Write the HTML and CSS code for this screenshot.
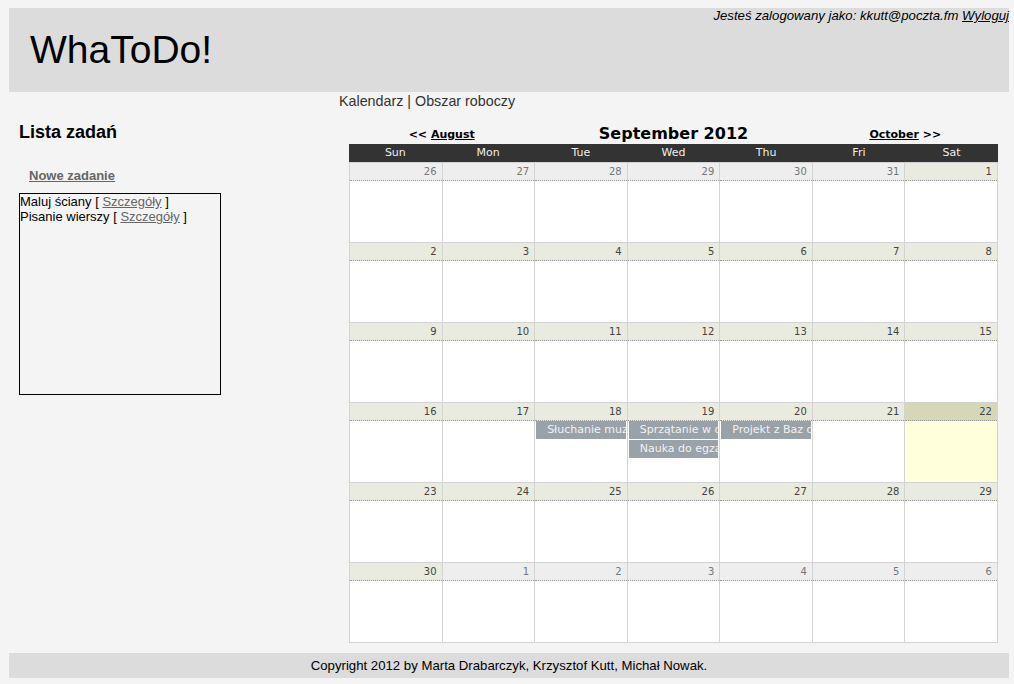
FILE: index.html
```html
<!DOCTYPE html>
<html lang="pl">
<head>
<meta charset="utf-8">
<title>WhaToDo!</title>
<link rel="stylesheet" href="styles.css">
</head>
<body>
<div class="page">
  <header class="top">
    <div class="login">Jesteś zalogowany jako: kkutt@poczta.fm <a href="#">Wyloguj</a></div>
    <h1 class="logo">WhaToDo!</h1>
  </header>
  <div class="main">
    <aside class="sidebar">
      <h2 class="side-title">Lista zadań</h2>
      <a class="new-task" href="#">Nowe zadanie</a>
      <div class="task-box">
        <div>Maluj ściany [ <a href="#">Szczegóły</a> ]</div>
        <div>Pisanie wierszy [ <a href="#">Szczegóły</a> ]</div>
      </div>
    </aside>
    <section class="content">
      <nav class="topnav">Kalendarz | Obszar roboczy</nav>
      <div class="calendar">
        <div class="cal-nav">
          <div class="nav-prev">&lt;&lt; <a href="#">August</a></div>
          <div class="nav-title">September 2012</div>
          <div class="nav-next"><a href="#">October</a> &gt;&gt;</div>
        </div>
        <div class="dow">
          <div>Sun</div><div>Mon</div><div>Tue</div><div>Wed</div><div>Thu</div><div>Fri</div><div>Sat</div>
        </div>
        <div class="grid">
          <div class="day other"><div class="num">26</div><div class="body"></div></div>
          <div class="day other"><div class="num">27</div><div class="body"></div></div>
          <div class="day other"><div class="num">28</div><div class="body"></div></div>
          <div class="day other"><div class="num">29</div><div class="body"></div></div>
          <div class="day other"><div class="num">30</div><div class="body"></div></div>
          <div class="day other"><div class="num">31</div><div class="body"></div></div>
          <div class="day"><div class="num">1</div><div class="body"></div></div>

          <div class="day"><div class="num">2</div><div class="body"></div></div>
          <div class="day"><div class="num">3</div><div class="body"></div></div>
          <div class="day"><div class="num">4</div><div class="body"></div></div>
          <div class="day"><div class="num">5</div><div class="body"></div></div>
          <div class="day"><div class="num">6</div><div class="body"></div></div>
          <div class="day"><div class="num">7</div><div class="body"></div></div>
          <div class="day"><div class="num">8</div><div class="body"></div></div>

          <div class="day"><div class="num">9</div><div class="body"></div></div>
          <div class="day"><div class="num">10</div><div class="body"></div></div>
          <div class="day"><div class="num">11</div><div class="body"></div></div>
          <div class="day"><div class="num">12</div><div class="body"></div></div>
          <div class="day"><div class="num">13</div><div class="body"></div></div>
          <div class="day"><div class="num">14</div><div class="body"></div></div>
          <div class="day"><div class="num">15</div><div class="body"></div></div>

          <div class="day"><div class="num">16</div><div class="body"></div></div>
          <div class="day"><div class="num">17</div><div class="body"></div></div>
          <div class="day"><div class="num">18</div><div class="body"><div class="event">Słuchanie muzyki</div></div></div>
          <div class="day"><div class="num">19</div><div class="body"><div class="event">Sprzątanie w domu</div><div class="event">Nauka do egzaminu</div></div></div>
          <div class="day"><div class="num">20</div><div class="body"><div class="event">Projekt z Baz danych</div></div></div>
          <div class="day"><div class="num">21</div><div class="body"></div></div>
          <div class="day today"><div class="num">22</div><div class="body"></div></div>

          <div class="day"><div class="num">23</div><div class="body"></div></div>
          <div class="day"><div class="num">24</div><div class="body"></div></div>
          <div class="day"><div class="num">25</div><div class="body"></div></div>
          <div class="day"><div class="num">26</div><div class="body"></div></div>
          <div class="day"><div class="num">27</div><div class="body"></div></div>
          <div class="day"><div class="num">28</div><div class="body"></div></div>
          <div class="day"><div class="num">29</div><div class="body"></div></div>

          <div class="day"><div class="num">30</div><div class="body"></div></div>
          <div class="day other"><div class="num">1</div><div class="body"></div></div>
          <div class="day other"><div class="num">2</div><div class="body"></div></div>
          <div class="day other"><div class="num">3</div><div class="body"></div></div>
          <div class="day other"><div class="num">4</div><div class="body"></div></div>
          <div class="day other"><div class="num">5</div><div class="body"></div></div>
          <div class="day other"><div class="num">6</div><div class="body"></div></div>
        </div>
      </div>
    </section>
  </div>
  <footer class="foot">Copyright 2012 by Marta Drabarczyk, Krzysztof Kutt, Michał Nowak.</footer>
</div>
</body>
</html>
```

FILE: styles.css
```css
html, body {
  margin: 0;
  padding: 0;
  background: #f4f4f4;
}
body {
  font-family: "Liberation Sans", Arial, sans-serif;
  color: #000;
}
.page {
  width: 1000px;
  margin: 8px 0 0 9px;
}
.top {
  background: #dcdcdc;
  height: 84px;
}
.login {
  text-align: right;
  font-style: italic;
  font-size: 13.2px;
  line-height: 15px;
}
.login a {
  color: #000;
}
.logo {
  margin: 5px 0 0 21px;
  font-size: 39px;
  font-weight: normal;
  line-height: 44px;
}
.main {
  display: flex;
}
.sidebar {
  width: 310px;
  padding: 0 10px;
}
.side-title {
  margin: 29px 0 0 0;
  font-size: 18px;
  line-height: 22px;
  font-weight: bold;
}
.new-task {
  display: block;
  margin: 25px 0 0 10px;
  font-size: 13px;
  line-height: 15px;
  font-weight: bold;
  color: #666;
  width: max-content;
}
.task-box {
  margin-top: 10px;
  width: 200px;
  height: 200px;
  border: 1px solid #000;
  font-size: 13px;
  line-height: 15px;
}
.task-box a {
  color: #666;
}
.content {
  flex: 1;
}
.topnav {
  margin-top: 1px;
  font-size: 14.3px;
  line-height: 16px;
  color: #333;
}
.calendar {
  width: 649px;
  margin: 15px 0 0 10px;
  font-family: "DejaVu Sans", Verdana, sans-serif;
}
.cal-nav {
  display: grid;
  grid-template-columns: 2fr 3fr 2fr;
  align-items: center;
  height: 20px;
  text-align: center;
}
.nav-prev, .nav-next {
  font-size: 11px;
  font-weight: bold;
  padding-top: 0;
}
.nav-prev a, .nav-next a {
  color: #000;
}
.nav-title {
  font-size: 16px;
  font-weight: bold;
  line-height: 20px;
  padding-top: 0;
}
.dow {
  display: grid;
  grid-template-columns: repeat(7, 1fr);
  background: #333;
  color: #eee;
  font-size: 11px;
  line-height: 18px;
  height: 18px;
  text-align: center;
}
.grid {
  display: grid;
  grid-template-columns: repeat(7, 1fr);
  gap: 1px;
  padding: 1px;
  background: #d3d3d3;
}
.day {
  background: #fff;
  min-width: 0;
}
.num {
  height: 17px;
  line-height: 17px;
  border-bottom: 1px dotted #999;
  background: #e9eae0;
  color: #444;
  font-size: 10px;
  text-align: right;
  padding-right: 5px;
}
.other .num {
  background: #eeeeee;
  color: #777;
}
.body {
  height: 61px;
  overflow: hidden;
}
.today .num {
  background: #d6d7b7;
}
.today .body {
  background: #ffffdc;
}
.event {
  margin: 0 1px 1px 1px;
  height: 18px;
  line-height: 18px;
  padding-left: 11px;
  background: #99a1a9;
  color: #f2f2f2;
  font-size: 11px;
  white-space: nowrap;
  overflow: hidden;
}
.foot {
  margin-top: 10px;
  height: 25px;
  line-height: 25px;
  background: #dcdcdc;
  text-align: center;
  font-size: 13.2px;
}
```
